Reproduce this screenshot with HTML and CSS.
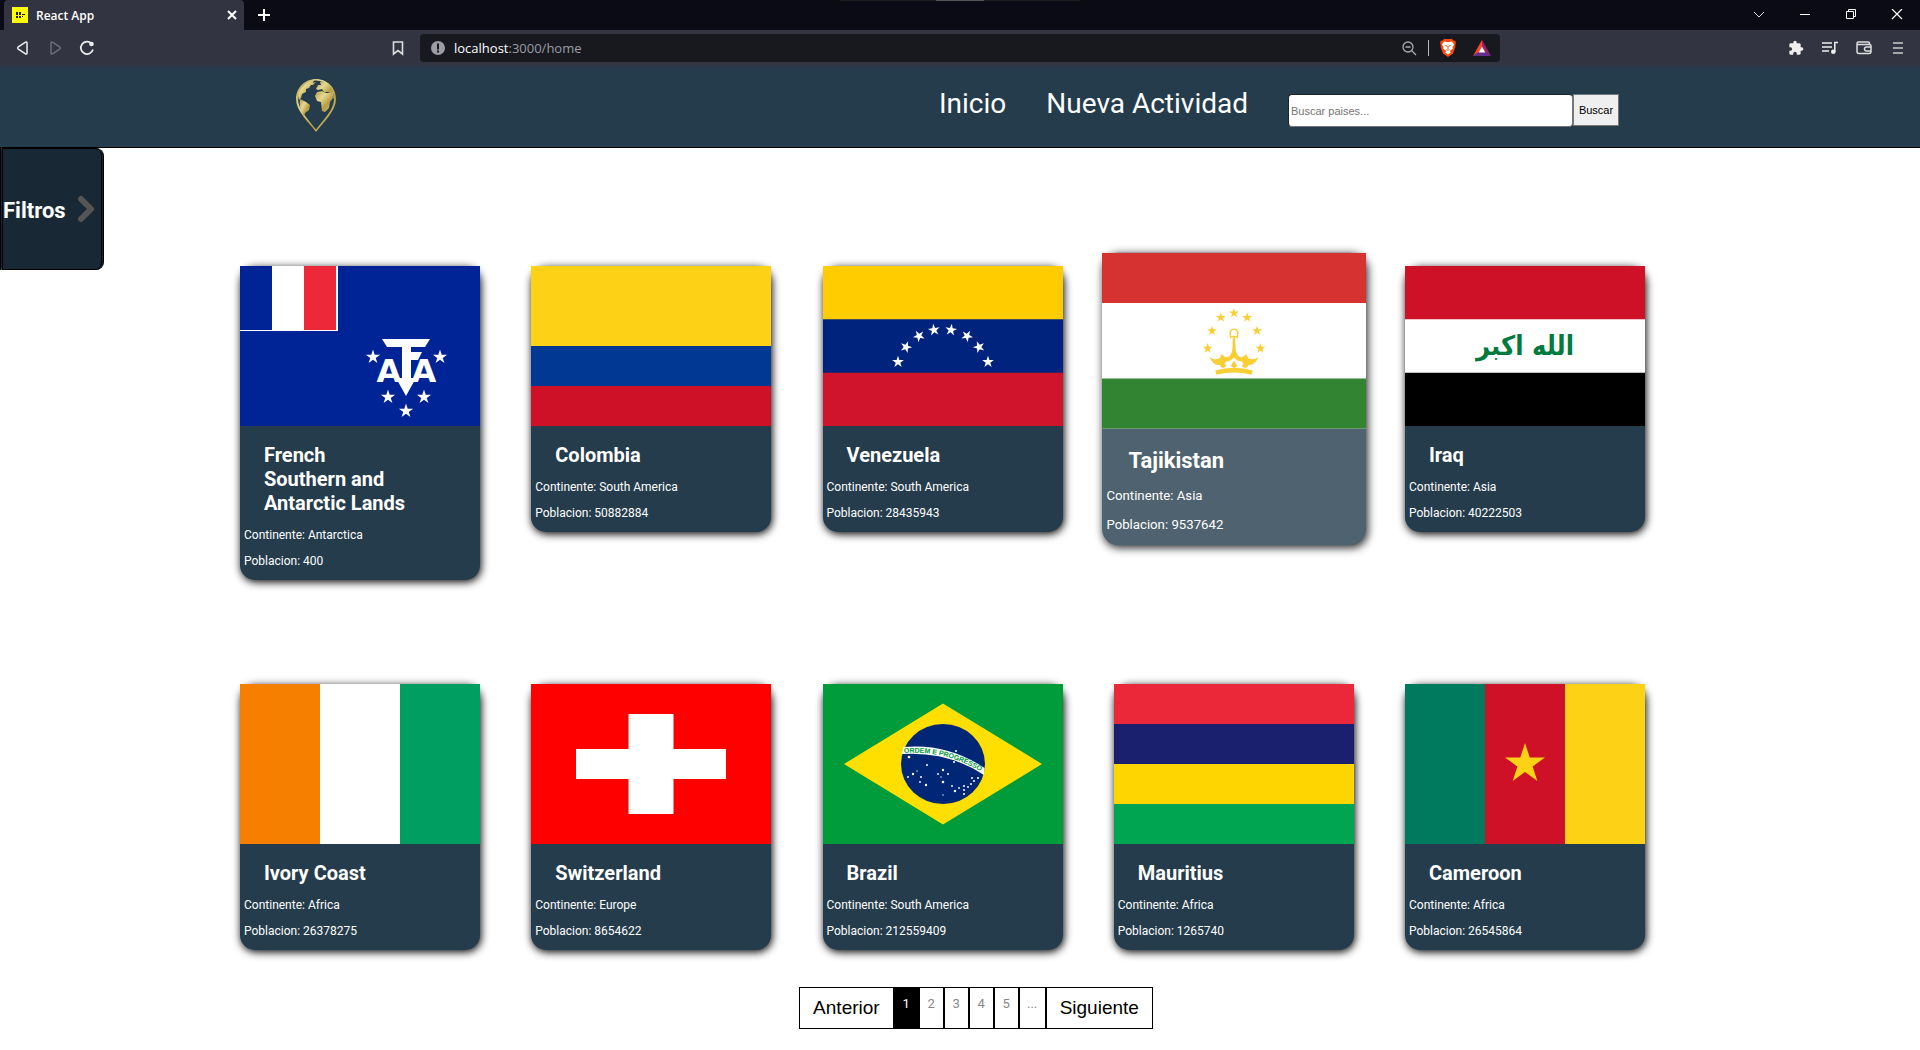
FILE: index.html
```html
<!DOCTYPE html>
<html lang="es">
<head>
<meta charset="utf-8">
<meta name="viewport" content="width=device-width, initial-scale=1">
<title>React App</title>
<link rel="stylesheet" href="styles.css">
</head>
<body>
<svg class="defs" aria-hidden="true">
  <defs>
    <polygon id="star" points="0,-10 2.25,-3.09 9.51,-3.09 3.63,1.18 5.88,8.09 0,3.82 -5.88,8.09 -3.63,1.18 -9.51,-3.09 -2.25,-3.09"/>
    <linearGradient id="gold" x1="0" y1="0" x2="1" y2="1">
      <stop offset="0" stop-color="#b39b45"/><stop offset=".35" stop-color="#e6d993"/><stop offset=".65" stop-color="#b89d42"/><stop offset="1" stop-color="#d9c980"/>
    </linearGradient>
  </defs>
</svg>

<div class="browser">
  <div class="tabstrip">
    <div class="tab">
      <svg class="favicon" width="16" height="16" viewBox="0 0 16 16"><path fill="#ff0" d="M0 0h16v16H0z"/><path d="M4 5h2v3H4zM7 5h2v3H7zM4 9h2v2H4zM7 9h2v2H7zM10 7h3v1h-3zM10 9h1v1h-1z" fill="#222"/></svg>
      <span class="tab-title">React App</span>
      <button class="icon-btn" aria-label="Close tab"><svg width="10" height="10" viewBox="0 0 10 10"><path d="M1 1l8 8M9 1L1 9" stroke="#fff" stroke-width="2"/></svg></button>
    </div>
    <button class="icon-btn new-tab" aria-label="New tab"><svg width="12" height="12" viewBox="0 0 12 12"><path d="M6 0v12M0 6h12" stroke="#fff" stroke-width="2"/></svg></button>
    <div class="grabber"><span></span></div>
    <div class="window-buttons">
      <button class="icon-btn" aria-label="Search tabs"><svg width="12" height="12" viewBox="0 0 12 12"><path d="M1 3l5 5 5-5" stroke="#ddd" fill="none"/></svg></button>
      <button class="icon-btn" aria-label="Minimize"><svg width="12" height="12" viewBox="0 0 12 12"><path d="M1 5.500h10" stroke="#fff"/></svg></button>
      <button class="icon-btn" aria-label="Restore"><svg width="12" height="12" viewBox="0 0 12 12"><path d="M1.500 2.500h7v7h-7zM3.500 2V.5h7v7H9" stroke="#fff" fill="none"/></svg></button>
      <button class="icon-btn" aria-label="Close"><svg width="12" height="12" viewBox="0 0 12 12"><path d="M1 0l10 10M11 0L1 10" stroke="#fff" stroke-width="1.200"/></svg></button>
    </div>
  </div>
  <div class="toolbar">
    <div class="tools-left">
      <button class="icon-btn" aria-label="Back"><svg width="16" height="16" viewBox="0 0 16 16"><path d="M12 2.500v11q-.5 1-1.500.3L3 8.800q-.8-.8 0-1.600l7.500-5q1-.7 1.500.3z" fill="none" stroke="#eee" stroke-width="1.500"/></svg></button>
      <button class="icon-btn" aria-label="Forward"><svg width="16" height="16" viewBox="0 0 16 16"><path d="M4 2.500v11q.5 1 1.500.3L13 8.800q.8-.8 0-1.600l-7.500-5q-1-.7-1.500.3z" fill="none" stroke="#6b6d79" stroke-width="1.500"/></svg></button>
      <button class="icon-btn" aria-label="Reload"><svg width="16" height="16" viewBox="0 0 16 16"><path d="M12.500 3.500A6.200 6.200 0 1 0 14 9.500" fill="none" stroke="#eee" stroke-width="1.700"/><circle cx="12.500" cy="4" r="2.300" fill="#eee"/></svg></button>
      <button class="icon-btn bookmark" aria-label="Bookmark"><svg width="12" height="16" viewBox="0 0 12 16"><path d="M1.500 2h9v12L6 10.500 1.500 14z" fill="none" stroke="#ddd" stroke-width="1.600"/></svg></button>
    </div>
    <div class="address">
      <svg width="16" height="16" viewBox="0 0 16 16"><circle cx="8" cy="8" r="7" fill="#9b9ca5"/><path d="M7 3.500h2v6H7zM7 10.500h2v2H7z" fill="#17191f"/></svg>
      <span class="url"><b>localhost</b>:3000/home</span>
      <button class="icon-btn zoom" aria-label="Zoom"><svg width="16" height="16" viewBox="0 0 16 16"><circle cx="7" cy="7" r="5" fill="none" stroke="#aaa" stroke-width="1.300"/><path d="M4.500 7h5M10.500 10.500L15 15" stroke="#aaa" stroke-width="1.300"/></svg></button>
      <button class="icon-btn shields" aria-label="Shields"><svg width="18" height="20" viewBox="0 0 18 20"><path fill="#fb4a0c" d="M5 1h8l1.500 1.800 1.500-.2 1 2.400-.8 2 .3 1.500-2.500 7L9 19l-5-3.500-2.500-7L1.800 7 1 5l1-2.400 1.500.2z"/><path fill="#fff" d="M5 3.500l4 .7 4-.7 2 3-1.500 2.500.3 1.500-3 2.500 1 1.500L9 16.500 6.200 14.500l1-1.500-3-2.500.3-1.500L3 6.500z"/><path fill="#fb4a0c" d="M5.500 7l2.500.5-.5 1.200zM12.500 7l-2.500.5.5 1.200zM8.500 8h1v3h-1zM7 11.500h4L9 12.700z"/></svg></button>
      <button class="icon-btn" aria-label="Rewards"><svg width="18" height="16" viewBox="0 0 18 16"><path fill="#ff4724" d="M9 0v7l-3 5-6 4z"/><path fill="#9e1f63" d="M9 0l9 16-6-4-3-5z"/><path fill="#662d91" d="M0 16l5.500-4h7L18 16z"/><path fill="#fff" d="M9 6.500l3.300 6H5.700z"/></svg></button>
    </div>
    <div class="tools-right">
      <button class="icon-btn" aria-label="Extensions"><svg width="16" height="16" viewBox="0 0 24 24"><path fill="#eee" d="M20.500 11H19V7c0-1.100-.9-2-2-2h-4V3.500a2.500 2.500 0 0 0-5 0V5H4c-1.100 0-2 .9-2 2v3.800h1.500a2.700 2.700 0 0 1 0 5.400H2V20c0 1.100.9 2 2 2h3.800v-1.500a2.700 2.700 0 0 1 5.400 0V22H17c1.100 0 2-.9 2-2v-4h1.500a2.500 2.500 0 0 0 0-5z"/></svg></button>
      <button class="icon-btn" aria-label="Media"><svg width="16" height="16" viewBox="0 0 16 16"><path d="M0 3h10M0 7h10M0 11h7M16 2.500h-3.200V12" fill="none" stroke="#eee" stroke-width="1.500"/><circle cx="11.300" cy="11.800" r="2.300" fill="#eee"/></svg></button>
      <button class="icon-btn" aria-label="Wallet"><svg width="16" height="16" viewBox="0 0 16 16"><path d="M1 4v7.500q0 2 2 2h10q2 0 2-2V6q0-1.500-1.500-1.500H2.500Q1 4.500 1 3.200T2.500 2H12q1.500 0 1.500 1.500v1M15 7h-4.500a2 2 0 0 0 0 4H15" fill="none" stroke="#ddd" stroke-width="1.500"/></svg></button>
      <button class="icon-btn" aria-label="Menu"><svg width="16" height="16" viewBox="0 0 16 16"><path d="M3 3h10M3 8h10M3 13h10" stroke="#ccc" stroke-width="1.700"/></svg></button>
    </div>
  </div>
</div>

<header class="site-header">
  <a class="logo" href="#" aria-label="Home">
    <svg width="42" height="54" viewBox="0 0 42 54"><g fill="url(#gold)">
      <path fill-rule="evenodd" d="M21 0C9.500 0 1 9 1 20c0 12 12 22 20 33 8-11 20-21 20-33C41 9 32.500 0 21 0zm0 1.500C31.500 1.500 39 10 39 20c0 11-11 21-18 30.500C14 41 3 31 3 20 3 10 10.500 1.500 21 1.500z"/>
      <path d="M3 17C4 9 10 3 19 1l-1 3 3-1-3 3-2 0-2 3-3 1 0 3-4 2-1 4-2 2z"/>
      <path d="M5 20l6 3 4 3-1 5-4 3-1 4C6 33 4 27 5 20z"/>
      <path d="M20 17l2-4 5-1 4 2 5 0 2 5-3 4-1 6-4 4-3-1-1-9-4-1z"/>
      <path d="M21 10l2-4 3 0-1-3 4-1 5 4 4 7 1 7-3-5-3-2-4 0-2-3-4 1z"/>
    </g></svg>
  </a>
  <nav class="nav">
    <a href="#">Inicio</a>
    <a href="#">Nueva Actividad</a>
    <form class="search">
      <input type="text" placeholder="Buscar paises..." aria-label="Buscar paises">
      <button type="button">Buscar</button>
    </form>
  </nav>
</header>

<main class="content">
  <button class="filters">Filtros
    <svg width="20" height="30" viewBox="0 0 20 30"><path d="M5 4l10 10L5 24" fill="none" stroke="#555" stroke-width="6" stroke-linecap="round" stroke-linejoin="round"/></svg>
  </button>
  <section class="cards">
    <article class="card">
      <svg class="flag" viewBox="0 0 240 160"><path fill="#002395" d="M0 0h240v160H0z"/><path fill="#fff" d="M32 0h66v65H0v-1h32z"/><path fill="#ed2939" d="M64 0h32v64H64z"/>
        <g fill="#fff"><path d="M142 73h48l-5 8h-38zM162 80h9v36h-9zM171 86h11l-4 8h-7zM156 112h20l-10 18z"/>
        <text class="emblem" x="149" y="116">A</text><text class="emblem" x="184" y="116">A</text>
        <use href="#star" transform="translate(133 91) scale(.75)"/><use href="#star" transform="translate(200 91) scale(.75)"/><use href="#star" transform="translate(148 131) scale(.75)"/><use href="#star" transform="translate(184 131) scale(.75)"/><use href="#star" transform="translate(166 145) scale(.75)"/></g></svg>
      <h2>French Southern and Antarctic Lands</h2><p>Continente: Antarctica</p><p>Poblacion: 400</p>
    </article>
    <article class="card">
      <svg class="flag" viewBox="0 0 240 160"><path fill="#fcd116" d="M0 0h240v80H0z"/><path fill="#003893" d="M0 80h240v40H0z"/><path fill="#ce1126" d="M0 120h240v40H0z"/></svg>
      <h2>Colombia</h2><p>Continente: South America</p><p>Poblacion: 50882884</p>
    </article>
    <article class="card">
      <svg class="flag" viewBox="0 0 240 160"><path fill="#fc0" d="M0 0h240v54H0z"/><path fill="#00247d" d="M0 53.300h240v54H0z"/><path fill="#cf142b" d="M0 106.700h240V160H0z"/>
        <g fill="#fff"><use href="#star" transform="translate(75 96) scale(.62)"/><use href="#star" transform="translate(83 81) rotate(20) scale(.62)"/><use href="#star" transform="translate(96 70) rotate(-30) scale(.62)"/><use href="#star" transform="translate(111 64) rotate(-8) scale(.62)"/><use href="#star" transform="translate(128 64) rotate(8) scale(.62)"/><use href="#star" transform="translate(144 70) rotate(30) scale(.62)"/><use href="#star" transform="translate(156 81) rotate(-20) scale(.62)"/><use href="#star" transform="translate(165 96) scale(.62)"/></g></svg>
      <h2>Venezuela</h2><p>Continente: South America</p><p>Poblacion: 28435943</p>
    </article>
    <article class="card card-active">
      <svg class="flag" viewBox="0 0 240 160"><path fill="#fff" d="M0 0h240v160H0z"/><path fill="#c00" d="M0 0h240v45.700H0z"/><path fill="#060" d="M0 114.300h240V160H0z"/>
        <g fill="#f8c300"><use href="#star" transform="translate(120 55) scale(.48)"/><use href="#star" transform="translate(108 59) scale(.48)"/><use href="#star" transform="translate(132 59) scale(.48)"/><use href="#star" transform="translate(100 71) scale(.48)"/><use href="#star" transform="translate(141 71) scale(.48)"/><use href="#star" transform="translate(96 87) scale(.48)"/><use href="#star" transform="translate(144 87) scale(.48)"/>
        <path d="M119 77h2l.5 11q1 6 4.500 7 3 0 5-3l2 4q5 2 9-1-2 6-7 7-5 1-8-3-4 0-7-4-3 4-7 4-3 4-8 3-5-1-7-7 4 3 9 1l2-4q2 3 5 3 3.500-1 4.500-7z"/><path d="M120 98l3 5-3 2-3-2zM110 99l3 4-3 2-3-2zM130 99l3 4-3 2-3-2zM103 107q17-5 34 0l-1 4q-16-4-32 0z"/></g>
        <path d="M117 77q-2-7 3-7.500 5 .5 3 7.500l-3-1z" fill="none" stroke="#f8c300" stroke-width="1.300"/></svg>
      <h2>Tajikistan</h2><p>Continente: Asia</p><p>Poblacion: 9537642</p>
    </article>
    <article class="card">
      <svg class="flag" viewBox="0 0 240 160"><path fill="#fff" d="M0 0h240v160H0z"/><path fill="#ce1126" d="M0 0h240v53.300H0z"/><path d="M0 106.700h240V160H0z"/><text class="takbir" x="120" y="89">الله اكبر</text></svg>
      <h2>Iraq</h2><p>Continente: Asia</p><p>Poblacion: 40222503</p>
    </article>
    <article class="card">
      <svg class="flag" viewBox="0 0 240 160"><path fill="#f77f00" d="M0 0h80v160H0z"/><path fill="#fff" d="M80 0h80v160H80z"/><path fill="#009e60" d="M160 0h80v160h-80z"/></svg>
      <h2>Ivory Coast</h2><p>Continente: Africa</p><p>Poblacion: 26378275</p>
    </article>
    <article class="card">
      <svg class="flag" viewBox="0 0 240 160"><path fill="red" d="M0 0h240v160H0z"/><path fill="#fff" d="M97.500 30h45v35H195v30h-52.500v35h-45V95H45V65h52.500z"/></svg>
      <h2>Switzerland</h2><p>Continente: Europe</p><p>Poblacion: 8654622</p>
    </article>
    <article class="card">
      <svg class="flag" viewBox="0 0 240 160"><path fill="#009b3a" d="M0 0h240v160H0z"/><path fill="#fedf00" d="M120 19.500l99 60.500-99 60.500L21 80z"/><ellipse cx="120" cy="80" rx="42" ry="40" fill="#002776"/><path fill="#fff" d="M80.500 63q44-4 81 21l-.5 7q-36-24-82-21z"/><path id="motto" fill="none" d="M81 69q43-3 81 21"/>
        <text class="motto"><textPath href="#motto">ORDEM E PROGRESSO</textPath></text>
        <g fill="#fff"><circle cx="86" cy="73" r="1.300"/><circle cx="104" cy="81" r="1"/><circle cx="90" cy="90" r="1.200"/><circle cx="94" cy="87" r=".7"/><circle cx="85" cy="93" r=".9"/><circle cx="98" cy="93" r="1"/><circle cx="97" cy="98" r=".9"/><circle cx="103" cy="101" r="1.200"/><circle cx="120" cy="86" r="1.200"/><circle cx="115" cy="90" r=".9"/><circle cx="125" cy="90" r="1"/><circle cx="118" cy="93" r=".7"/><circle cx="120" cy="98" r="1.300"/><circle cx="131" cy="78" r="1"/><circle cx="133" cy="67" r="1"/><circle cx="129" cy="102" r=".9"/><circle cx="132" cy="107" r="1.200"/><circle cx="136" cy="104" r=".9"/><circle cx="141" cy="102" r="1"/><circle cx="141" cy="106" r="1"/><circle cx="141" cy="110" r="1"/><circle cx="145" cy="103" r=".9"/><circle cx="148" cy="100" r="1"/><circle cx="151" cy="97" r="1"/><circle cx="149" cy="94" r="1"/><circle cx="155" cy="94" r="1"/><circle cx="120" cy="111" r=".7"/></g></svg>
      <h2>Brazil</h2><p>Continente: South America</p><p>Poblacion: 212559409</p>
    </article>
    <article class="card">
      <svg class="flag" viewBox="0 0 240 160"><path fill="#ea2839" d="M0 0h240v40H0z"/><path fill="#1a206d" d="M0 40h240v40H0z"/><path fill="#ffd500" d="M0 80h240v40H0z"/><path fill="#00a551" d="M0 120h240v40H0z"/></svg>
      <h2>Mauritius</h2><p>Continente: Africa</p><p>Poblacion: 1265740</p>
    </article>
    <article class="card">
      <svg class="flag" viewBox="0 0 240 160"><path fill="#007a5e" d="M0 0h80v160H0z"/><path fill="#ce1126" d="M80 0h80v160H80z"/><path fill="#fcd116" d="M160 0h80v160h-80z"/><use href="#star" fill="#fcd116" transform="translate(120 80) scale(2.100)"/></svg>
      <h2>Cameroon</h2><p>Continente: Africa</p><p>Poblacion: 26545864</p>
    </article>
  </section>
  <nav class="pagination" aria-label="Paginas">
    <button class="step">Anterior</button><button class="current">1</button><button>2</button><button>3</button><button>4</button><button>5</button><button>...</button><button class="step">Siguiente</button>
  </nav>
</main>
</body>
</html>
```
FILE: styles.css
```css
* { box-sizing: border-box; }
body { margin: 0; background: #fff; font-family: Roboto, sans-serif; color: #fff; }
button { font: inherit; cursor: pointer; }
svg { display: block; }
.defs { position: absolute; width: 0; height: 0; }

/* browser chrome */
.browser { font-family: "Open Sans", sans-serif; background: #323442; }
.icon-btn { display: flex; align-items: center; justify-content: center; padding: 0; border: 0; background: none; }
.tabstrip { display: flex; align-items: center; height: 30px; padding-left: 4px; background: #0a0b14; }
.tab { display: flex; align-items: center; gap: 8px; width: 240px; height: 30px; padding: 0 7px 0 8px; background: #323442; border-radius: 4px 4px 0 0; }
.tab-title { flex: 1; font-size: 12px; font-weight: 600; }
.new-tab { margin-left: 14px; }
.grabber { align-self: flex-start; width: 240px; height: 1px; margin: 0 auto 0 570px; background: #1d1e1c; }
.grabber span { display: block; width: 48px; height: 1px; margin: 0 auto; background: #555; }
.window-buttons { display: flex; gap: 34px; padding-right: 17px; }
.toolbar { display: grid; grid-template-columns: 420px 1fr 420px; align-items: center; height: 37px; padding-bottom: 1px; }
.tools-left { display: flex; gap: 16px; padding: 0 16px 0 15px; }
.bookmark { margin-left: auto; }
.tools-right { display: flex; justify-content: flex-end; gap: 18px; padding-right: 14px; }
.address { display: flex; align-items: center; height: 28px; padding: 0 9px 0 10px; gap: 8px; background: #17191f; border-radius: 4px; color: #9b9ca5; }
.url { flex: 1; font-size: 13px; }
.url b { color: #fff; font-weight: 400; }
.shields { height: 16px; margin: 0 8px 0 3px; padding-left: 10px; border-left: 1px solid #bbb; }

/* site header */
.site-header { display: flex; justify-content: space-between; align-items: flex-start; height: 81px; padding: 12px 301px 0 295px; background: #243c4c; border-bottom: 1px solid #000; }
.nav { display: flex; align-items: flex-start; gap: 40px; padding-top: 4px; }
.nav a { color: #fff; font-size: 28px; line-height: 40px; padding-top: 1px; text-decoration: none; }
.search { display: flex; align-items: flex-start; padding-top: 11px; }
.search input { width: 285px; height: 33px; padding: 0 2px; border: 1px solid #222; border-color: #222 #767676 #767676 #222; border-radius: 4px; background: #fff; font: 11px "Liberation Sans", Arial, sans-serif; }
.search button { width: 46px; height: 32px; padding: 0; border: 1px solid #767676; background: #efefef; color: #000; font: 11px "Liberation Sans", Arial, sans-serif; }

/* country list */
.content { position: relative; padding-bottom: 20px; }
.filters { position: absolute; top: 0; left: 0; display: flex; align-items: center; gap: 10px; width: 104px; height: 122px; padding: 2px 0 0; border: solid #000; border-style: solid double; border-width: 1px 3px; border-radius: 0 8px 8px 0; background: #182935; color: #fff; font-size: 22px; font-weight: 700; }
.cards { display: grid; grid-template-columns: repeat(5, 240px); justify-content: space-between; align-items: start; row-gap: 104px; padding: 118px 275px 37px 240px; }
.card { padding-bottom: 3px; border-radius: 15px; background: #243c4c; box-shadow: 1px 2px 8px #000; }
.card-active { opacity: .8; transform: scale(1.1); }
.flag { width: 100%; height: auto; }
.card h2 { width: 144px; margin: 17px 0 10px 24px; font-size: 20px; line-height: 24px; font-weight: 700; }
.card p { margin: 0 4px 6px; font-size: 12px; line-height: 20px; }
.emblem { font: 700 32px "DejaVu Sans", sans-serif; text-anchor: middle; }
.takbir { font: 700 27px "DejaVu Sans Condensed", "DejaVu Sans", sans-serif; text-anchor: middle; fill: #007a3d; }
.motto { font: 700 7px "Liberation Sans", sans-serif; fill: #009b3a; }

/* pagination */
.pagination { display: flex; justify-content: center; padding-left: 32px; }
.pagination button { display: flex; justify-content: center; width: 25px; height: 42px; padding: 8px 0; border: 1px solid #000; background: #fff; color: #888; font-size: 13px; line-height: 16px; }
.pagination button:nth-child(7) { width: 27px; }
.pagination .current { background: #000; color: #fff; }
.pagination .step { width: auto; padding: 8px 13px; color: #000; font-family: "Liberation Sans", Arial, sans-serif; font-size: 19px; line-height: 24px; }
```
